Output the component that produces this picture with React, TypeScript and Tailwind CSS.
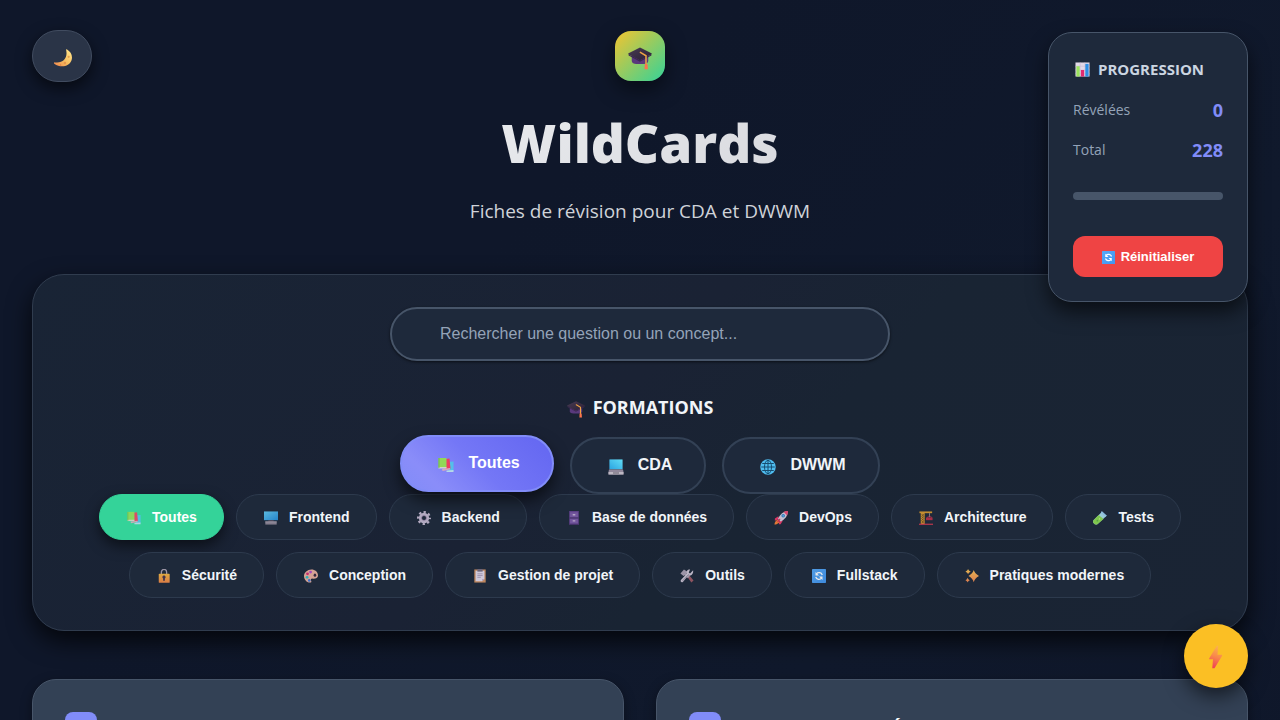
import { ReactNode, useState } from 'react';

const glyphs: Record<string, ReactNode> = {
  moon: (
    <>
      <defs>
        <linearGradient id="moonFill" x1="1" y1="0" x2="0.1" y2="1">
          <stop offset="0.2" stopColor="#ffdc80" />
          <stop offset="0.6" stopColor="#f6bb5e" />
          <stop offset="1" stopColor="#f08a4f" />
        </linearGradient>
      </defs>
      <path d="M22 2c7 4 10 11 7.500 18C26 29 13 33 2 25c-1-1-.2-2.200 1.200-2C16 25 24 16 21 3.200c-.2-1 .3-1.500 1-1.200z" fill="url(#moonFill)" />
      <circle cx="25" cy="14" r="1.800" fill="#e6a04c" />
      <circle cx="19" cy="24" r="2" fill="#e6964c" />
      <circle cx="12" cy="27" r="1.200" fill="#dd8146" />
    </>
  ),
  cap: (
    <>
      <defs>
        <linearGradient id="capTop" x1="0" y1="0" x2="1" y2="1">
          <stop offset="0" stopColor="#483b52" />
          <stop offset="1" stopColor="#2b2036" />
        </linearGradient>
      </defs>
      <path d="M5 12v8c0 2.500 3 4 6 4h10c3 0 6-1.500 6-4v-8z" fill="#59397c" />
      <path d="M16 2 .8 9.500c-.7.4-.7 1 0 1.400L16 19l15.200-8.100c.7-.4.700-1 0-1.400z" fill="url(#capTop)" />
      <path d="M.8 10.900 16 19l15.200-8.100v1.600L16 21 .8 12.500z" fill="#3c2851" />
      <path d="M16.500 8.500 24 13V27" fill="none" stroke="#f0a444" strokeWidth="2" strokeLinecap="round" />
      <path d="M22.500 24h3.500l.5 7h-4.500z" fill="#fb744e" />
    </>
  ),
  chart: (
    <>
      <path d="M1 1h30v30H1z" fill="#e2d9e8" />
      <path d="M11 1v30M21 1v30M1 9h30M1 17h30M1 25h30" stroke="#c9b9d4" strokeWidth="1.200" />
      <path d="M3 9h7v22H3z" fill="#9be35e" />
      <path d="M12.500 17h7v14h-7z" fill="#e22b70" />
      <path d="M22 4h7v27h-7z" fill="#2d8fe5" />
    </>
  ),
  refresh: (
    <>
      <defs>
        <linearGradient id="refreshFill" x1="0" y1="0" x2="1" y2="1">
          <stop offset="0" stopColor="#56a9f8" />
          <stop offset="1" stopColor="#4295ef" />
        </linearGradient>
      </defs>
      <rect x="0" y="0" width="32" height="32" rx="1.500" fill="url(#refreshFill)" />
      <path d="M23.500 13.500A8 8 0 0 0 10 11M8.500 18.500A8 8 0 0 0 22 21" fill="none" stroke="#fff" strokeWidth="3" />
      <path d="M8 7v8h8zM24 25v-8h-8z" fill="#fff" />
    </>
  ),
  books: (
    <>
      <path d="M19 10 31 9v19l-10 2z" fill="#54bfe9" />
      <path d="m17 27 14-1v4H17z" fill="#b7d9e8" />
      <path d="m15 4 8-1 2 20-10 3z" fill="#ed3e62" />
      <path d="m8 24 16-2v3L9 28z" fill="#d8a8bc" />
      <path d="M1 2h16v20H1z" fill="#92d957" />
      <path d="M1 20h16v3H1z" fill="#d5d2cc" />
      <path d="M1 2h2v20H1z" fill="#70b951" />
    </>
  ),
  laptop: (
    <>
      <defs>
        <linearGradient id="laptopScreen" x1="0" y1="1" x2="1" y2="0">
          <stop offset="0" stopColor="#2ba5e2" />
          <stop offset="1" stopColor="#61dcf6" />
        </linearGradient>
      </defs>
      <path d="M3 1h26v21H3z" fill="#39647d" />
      <path d="M3 1h26v19H3z" fill="url(#laptopScreen)" />
      <path d="M2 21h28l1 5v5H1v-5z" fill="#91889b" />
      <path d="M1 26h30v5H1z" fill="#bcb7c2" />
      <path d="M10 27h12v2H10z" fill="#655f6e" />
    </>
  ),
  globe: (
    <>
      <circle cx="16" cy="16" r="15.500" fill="#4fbdf0" />
      <g fill="none" stroke="#174d70" strokeWidth="2">
        <ellipse cx="16" cy="16" rx="7" ry="13.500" />
        <path d="M16 2.500v27M2.500 16h27M4.500 9h23M4.500 23h23" />
      </g>
    </>
  ),
  desktop: (
    <>
      <defs>
        <linearGradient id="desktopScreen" x1="0" y1="0" x2="1" y2="1">
          <stop offset="0" stopColor="#62c9f1" />
          <stop offset="1" stopColor="#268fdc" />
        </linearGradient>
      </defs>
      <path d="M0 1h32v20H0z" fill="url(#desktopScreen)" />
      <path d="M10 21h12v4H10z" fill="#5c5364" />
      <path d="M3 24h26v7H3z" fill="#8d8697" />
      <path d="M3 24h26v2H3z" fill="#aaa3b0" />
    </>
  ),
  gear: (
    <g fill="none" stroke="#c3b8cf">
      <circle cx="16" cy="16" r="8.500" strokeWidth="6.500" />
      <circle cx="16" cy="16" r="13.500" strokeWidth="5" strokeDasharray="5.300 5.300" strokeDashoffset="2.600" />
      <circle cx="16" cy="16" r="5.500" stroke="#8c769d" strokeWidth="1.500" />
    </g>
  ),
  cabinet: (
    <>
      <path d="M5 0h22v32H5z" fill="#644391" />
      <path d="M7 3h18v11H7zM7 17h18v12H7z" fill="#7c5ba8" />
      <path d="M5 15h22v2H5zM5 29h22v3H5z" fill="#49336e" />
      <path d="M13 7h6v3h-6zM13 21h6v3h-6z" fill="#c6b4d6" />
    </>
  ),
  rocket: (
    <>
      <path d="m10 12-8 5v5l9-3zM20 22l-5 8h-4l2-11z" fill="#ed3769" />
      <path d="M32 0C21 1 14 7 9 18l6 6C25 19 31 12 32 0z" fill="#d5cede" />
      <path d="M32 0c-4 0-8 1-10 2l8 8c1-3 2-6 2-10z" fill="#ef4a73" />
      <circle cx="21" cy="11" r="4" fill="#327bc7" />
      <circle cx="21" cy="11" r="2" fill="#65bce9" />
      <path d="m8 20 5 5c-3 3-7 6-12 6 0-5 3-9 7-11z" fill="#f78035" />
      <path d="m13 19-4 5" stroke="#e62f5c" strokeWidth="3" strokeLinecap="round" />
    </>
  ),
  crane: (
    <>
      <path d="M1 1h29v4H1z" fill="#d69a2f" />
      <path d="M4 4h9v26H4z" fill="#d69a2f" />
      <path d="m6 7 5 5-5 5 5 5-5 6M11 7l-5 5 5 5-5 5 5 6" fill="none" stroke="#614324" strokeWidth="1.600" />
      <path d="M24 5v9" stroke="#a7a0ab" strokeWidth="1.800" />
      <path d="m19 14 5-3 5 3v2H19z" fill="none" stroke="#bf3650" strokeWidth="1.500" />
      <path d="M16 15h15v6H16z" fill="#b52f49" />
      <path d="M0 29h32v2.500H0z" fill="#e23b52" />
    </>
  ),
  tube: (
    <>
      <path d="M20 2 30 12 10 30c-6 3-12-3-9-9z" fill="#a8dce8" />
      <path d="m13 9 11 9-14 12c-6 3-12-3-9-9z" fill="#8bd951" />
      <path d="m20 0 12 11-4 2L18 4z" fill="#9accef" />
      <circle cx="10" cy="22" r="2" fill="#5eb144" />
      <circle cx="15" cy="18" r="1.300" fill="#d0f49a" />
    </>
  ),
  lock: (
    <>
      <defs>
        <linearGradient id="lockFill" x1="0" y1="0" x2="0" y2="1">
          <stop offset="0" stopColor="#f3b842" />
          <stop offset="1" stopColor="#ef8648" />
        </linearGradient>
      </defs>
      <path d="M10 14V7a6 6 0 0 1 12 0v7" fill="none" stroke="#aaa1b1" strokeWidth="3" />
      <rect x="4" y="11" width="25" height="20.500" rx="1.500" fill="url(#lockFill)" />
      <path d="M16 15a3.500 3.500 0 0 0-2 6.500V27h4v-5.500A3.500 3.500 0 0 0 16 15z" fill="#46354c" />
    </>
  ),
  palette: (
    <>
      <path d="M17 1C8 1 0 8 0 16s6 15 13 15c5 0 4-3 3-5-1-3 1-5 4-4 5 1 12-1 12-7C32 6 25 1 17 1z" fill="#eab09e" />
      <ellipse cx="25" cy="14" rx="3" ry="3.500" fill="#39283f" />
      <circle cx="8" cy="11" r="3.200" fill="#d52f74" />
      <circle cx="15" cy="7" r="3.200" fill="#b34bce" />
      <circle cx="7" cy="19" r="3.200" fill="#31bfc6" />
      <circle cx="12" cy="26" r="3" fill="#4379db" />
    </>
  ),
  clipboard: (
    <>
      <path d="M3 1h26v30H3z" fill="#cf9062" />
      <path d="M6 4h20v19l-5 5H6z" fill="#e3dbeb" />
      <path d="M10 0h12v6H10z" fill="#756c80" />
      <path d="M10 11h12M10 15h12M10 19h8" stroke="#a090b1" strokeWidth="1.800" />
      <path d="M21 28v-5h5z" fill="#b7a6c4" />
    </>
  ),
  tools: (
    <>
      <path d="m17 18 4-4 10 12-5 5z" fill="#9a5965" />
      <path d="M1 10 9 1l9 6-3 4 7 6-4 4-7-7-3 2z" fill="#aaa0b3" />
      <path d="M30 3 23 10l-3-2 3-7c-7 0-9 5-7 9L2 25c-2 4 2 7 5 4l12-14c7 2 12-4 11-12z" fill="#cec6d6" />
      <path d="m5 28 15-16" stroke="#80758b" strokeWidth="1.500" />
    </>
  ),
  sparkles: (
    <>
      <defs>
        <linearGradient id="sparkFill" x1="0" y1="0" x2="0" y2="1">
          <stop offset="0" stopColor="#fbc555" />
          <stop offset="1" stopColor="#f28753" />
        </linearGradient>
      </defs>
      <path d="M20 2c2 6 5 9 12 14-7 4-10 8-12 14-2-6-5-10-12-14 7-5 10-8 12-14zM7 0c1 3 2.500 4.500 6 6-3.500 1.500-5 3-6 6-1-3-2.500-4.500-6-6 3.500-1.500 5-3 6-6zM6 20c1 3 2 4 5 5.500-3 1.500-4 2.500-5 5.500-1-3-2-4-5-5.500 3-1.500 4-2.500 5-5.500z" fill="url(#sparkFill)" />
    </>
  ),
  bolt: (
    <>
      <defs>
        <linearGradient id="boltFill" x1="0.6" y1="0" x2="0.4" y2="1">
          <stop offset="0" stopColor="#fbb34c" />
          <stop offset="0.45" stopColor="#f98b4b" />
          <stop offset="1" stopColor="#ef3f56" />
        </linearGradient>
      </defs>
      <path d="M17 1 7 17.500c-.5.900-.2 1.500.7 1.500H12l-1 12h3l10-16.500c.5-.9.100-1.500-.8-1.500H18l1-12z" fill="url(#boltFill)" />
    </>
  ),
};

function Glyph({ name, className }: { name: string; className: string }) {
  return (
    <svg viewBox="0 0 32 32" aria-hidden="true" className={`shrink-0 ${className}`}>
      {glyphs[name]}
    </svg>
  );
}

const tracks = [
  { icon: 'books', label: 'Toutes' },
  { icon: 'laptop', label: 'CDA' },
  { icon: 'globe', label: 'DWWM' },
];

const topics = [
  { icon: 'books', label: 'Toutes' },
  { icon: 'desktop', label: 'Frontend' },
  { icon: 'gear', label: 'Backend' },
  { icon: 'cabinet', label: 'Base de données' },
  { icon: 'rocket', label: 'DevOps' },
  { icon: 'crane', label: 'Architecture' },
  { icon: 'tube', label: 'Tests' },
  { icon: 'lock', label: 'Sécurité' },
  { icon: 'palette', label: 'Conception' },
  { icon: 'clipboard', label: 'Gestion de projet' },
  { icon: 'tools', label: 'Outils' },
  { icon: 'refresh', label: 'Fullstack' },
  { icon: 'sparkles', label: 'Pratiques modernes' },
];

function TrackButton({ icon, label, active, onClick }: { icon: string; label: string; active: boolean; onClick: () => void }) {
  const tone = active
    ? '-translate-y-0.5 border-[#818cf8] bg-[linear-gradient(45deg,#818cf8_0%,#8a8df9_20%,#7477f6_50%,#6366f1_100%)] text-white shadow-[0_8px_16px_rgba(0,0,0,0.6)]'
    : 'border-[#334155] bg-[#1e293b] text-[#f1f5f9]';
  return (
    <button
      type="button"
      aria-pressed={active}
      onClick={onClick}
      className={`flex h-[57px] items-center gap-2.5 rounded-full border-2 px-8 pb-0.5 font-['Liberation_Sans',Arial,sans-serif] text-base font-bold ${tone}`}
    >
      <span className="flex w-6 justify-center pt-1">
        <Glyph name={icon} className="size-4" />
      </span>
      {label}
    </button>
  );
}

function TopicButton({ icon, label, active, onClick }: { icon: string; label: string; active: boolean; onClick: () => void }) {
  const tone = active
    ? 'border-[#34d399] bg-[#34d399] text-white shadow-[0_6px_14px_rgba(0,0,0,0.55)]'
    : 'border-[#2d3a4d] bg-[#1e293a] text-[#f1f5f9]';
  return (
    <button
      type="button"
      aria-pressed={active}
      onClick={onClick}
      className={`flex h-[46px] items-center gap-2 rounded-full border pr-[26px] pl-6 font-['Liberation_Sans',Arial,sans-serif] text-sm font-bold ${tone}`}
    >
      <span className="flex w-5 justify-center pt-0.5">
        <Glyph name={icon} className="size-3.5 opacity-90" />
      </span>
      {label}
    </button>
  );
}

function QuestionCard({ title }: { title: string }) {
  return (
    <article className="flex items-start gap-4 rounded-3xl border border-[#475569] bg-[#334155] p-8 shadow-[0_4px_12px_rgba(0,0,0,0.4)]">
      <span className="flex size-8 items-center justify-center rounded-lg bg-[#818cf8] pt-1 text-sm font-bold text-white">Q</span>
      <h3 className="pt-0.5 text-lg leading-7 font-bold text-[#f8fafc]">{title}</h3>
    </article>
  );
}

export default function App() {
  const [track, setTrack] = useState(0);
  const [topic, setTopic] = useState(0);
  const [dark, setDark] = useState(true);

  return (
    <div className="relative min-h-screen bg-[linear-gradient(135deg,#0f172a_0%,#0f172a_35%,#10192c_70%,#0f172a_100%)] px-8 pb-12 font-['Open_Sans','Segoe_UI',sans-serif]">
      <button
        type="button"
        aria-label="Changer de thème"
        aria-pressed={dark}
        onClick={() => setDark(!dark)}
        className="absolute top-[30px] left-8 flex h-[52px] w-[60px] items-center justify-center rounded-[26px] border border-[#414c60] bg-[#2a3447] shadow-[0_6px_16px_rgba(0,0,0,0.6)]"
      >
        <Glyph name="moon" className="mt-1 ml-0.5 size-5" />
      </button>

      <aside className="absolute top-8 right-8 z-10 w-[200px] rounded-3xl border border-[#475569] bg-[#1e293b] p-6 shadow-[0_10px_20px_rgba(0,0,0,0.6)]">
        <h2 className="flex items-center gap-2 pl-0.5 text-[15px] leading-6 font-bold text-[#cbd5e1]">
          <Glyph name="chart" className="size-[15px]" />
          PROGRESSION
        </h2>
        <dl className="mt-[15px] flex flex-col gap-3">
          <div className="flex items-center justify-between">
            <dt className="text-sm leading-7 text-[#94a3b8]">Révélées</dt>
            <dd className="text-lg leading-7 font-bold text-[#818cf8]">0</dd>
          </div>
          <div className="flex items-center justify-between">
            <dt className="text-sm leading-7 text-[#94a3b8]">Total</dt>
            <dd className="text-lg leading-7 font-bold text-[#818cf8]">228</dd>
          </div>
        </dl>
        <div role="progressbar" aria-label="Progression" aria-valuenow={0} aria-valuemax={228} className="mt-7 h-2 rounded bg-[#475569]" />
        <button
          type="button"
          className="mt-9 flex h-[41px] w-full items-center justify-center gap-1.5 rounded-xl bg-[#ef4444] pt-px font-['Liberation_Sans',Arial,sans-serif] text-[13px] font-bold text-white"
        >
          <Glyph name="refresh" className="size-[13px]" />
          Réinitialiser
        </button>
      </aside>

      <header className="flex flex-col items-center pt-[31px] text-center">
        <div className="flex size-[50px] items-center justify-center rounded-2xl bg-[linear-gradient(135deg,#f4c430_0%,#a5ca58_40%,#34d399_100%)] shadow-[0_8px_20px_rgba(0,0,0,0.5)]">
          <Glyph name="cap" className="mt-1 size-6" />
        </div>
        <h1 className="mt-6 bg-[linear-gradient(135deg,#e8eaed,#d9dadf)] bg-clip-text text-[53px] leading-[76px] font-extrabold text-transparent">WildCards</h1>
        <p className="mt-4 text-[19px] leading-7 text-[#cfd3d9]">Fiches de révision pour CDA et DWWM</p>
      </header>

      <section className="mt-[49px] rounded-[32px] border border-[#303c4e] bg-[linear-gradient(135deg,#192435_0%,#1a2234_45%,#192433_60%,#1a2434_100%)] p-8 shadow-[0_10px_24px_rgba(0,0,0,0.75)]">
        <input
          type="search"
          aria-label="Rechercher une question ou un concept"
          placeholder="Rechercher une question ou un concept..."
          className="mx-auto block h-[54px] w-full max-w-[500px] rounded-full border-2 border-[#475569] bg-[#1e293b] px-12 font-['Liberation_Sans',Arial,sans-serif] text-base text-[#f1f5f9] shadow-[0_1px_3px_rgba(0,0,0,0.6)] placeholder:text-[#94a3b8]"
        />
        <h2 className="mt-8 flex items-center justify-center gap-2 text-lg leading-7 font-bold text-[#f1f5f9]">
          <Glyph name="cap" className="mt-1 size-[18px]" />
          FORMATIONS
        </h2>
        <div className="mt-4 flex flex-wrap justify-center gap-4">
          {tracks.map((t, i) => (
            <TrackButton key={t.label} icon={t.icon} label={t.label} active={i === track} onClick={() => setTrack(i)} />
          ))}
        </div>
        <div className="flex flex-wrap justify-center gap-3">
          {topics.map((t, i) => (
            <TopicButton key={t.label} icon={t.icon} label={t.label} active={i === topic} onClick={() => setTopic(i)} />
          ))}
        </div>
      </section>

      <main className="mt-12 grid grid-cols-2 gap-8">
        <QuestionCard title="Architecture MVC" />
        <QuestionCard title="Design pattern « État »" />
      </main>

      <button
        type="button"
        aria-label="Révision rapide"
        className="fixed right-8 bottom-8 z-20 flex size-16 items-center justify-center rounded-full bg-[#fbbf24] shadow-[0_8px_20px_rgba(0,0,0,0.6)]"
      >
        <Glyph name="bolt" className="mt-0.5 size-6" />
      </button>
    </div>
  );
}
